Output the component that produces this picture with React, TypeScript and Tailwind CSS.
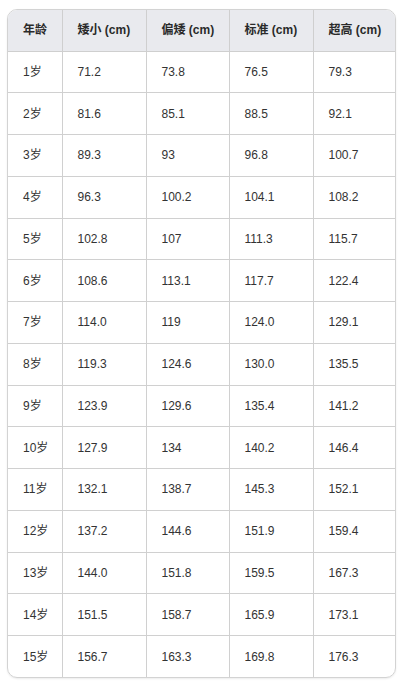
const rows: string[][] = [
  ["1岁", "71.2", "73.8", "76.5", "79.3"],
  ["2岁", "81.6", "85.1", "88.5", "92.1"],
  ["3岁", "89.3", "93", "96.8", "100.7"],
  ["4岁", "96.3", "100.2", "104.1", "108.2"],
  ["5岁", "102.8", "107", "111.3", "115.7"],
  ["6岁", "108.6", "113.1", "117.7", "122.4"],
  ["7岁", "114.0", "119", "124.0", "129.1"],
  ["8岁", "119.3", "124.6", "130.0", "135.5"],
  ["9岁", "123.9", "129.6", "135.4", "141.2"],
  ["10岁", "127.9", "134", "140.2", "146.4"],
  ["11岁", "132.1", "138.7", "145.3", "152.1"],
  ["12岁", "137.2", "144.6", "151.9", "159.4"],
  ["13岁", "144.0", "151.8", "159.5", "167.3"],
  ["14岁", "151.5", "158.7", "165.9", "173.1"],
  ["15岁", "156.7", "163.3", "169.8", "176.3"],
]

const headers = ["年龄", "矮小 (cm)", "偏矮 (cm)", "标准 (cm)", "超高 (cm)"]

export default function App() {
  return (
    <div
      className="min-h-screen bg-white pt-[9px] pl-[7px]"
      style={{ fontFamily: '"Liberation Sans", Arial, "Noto Sans CJK SC", sans-serif' }}
    >
      <div className="w-[389px] overflow-hidden rounded-[10px] border border-[#d3d3d3] shadow-[0_1px_2px_rgba(0,0,0,0.08)]">
        <table className="w-full table-fixed border-collapse text-[12px]">
          <colgroup>
            <col className="w-[54px]" />
            <col className="w-[84px]" />
            <col className="w-[83px]" />
            <col className="w-[84px]" />
            <col />
          </colgroup>
          <thead>
            <tr className="h-[41px] bg-[#e9eaee]">
              {headers.map((h, i) => (
                <th
                  key={h}
                  className={`whitespace-nowrap border-b border-[#cfcfcf] pl-[15px] pr-1 text-left font-bold text-[#2a2a2a] ${
                    i > 0 ? "border-l" : ""
                  }`}
                >
                  {h}
                </th>
              ))}
            </tr>
          </thead>
          <tbody>
            {rows.map((r, ri) => (
              <tr key={r[0]} className="h-[41.75px]">
                {r.map((c, i) => (
                  <td
                    key={i}
                    className={`whitespace-nowrap border-[#d0d0d0] pl-[15px] pr-1 text-[#333] ${
                      i > 0 ? "border-l" : ""
                    } ${ri < rows.length - 1 ? "border-b" : ""}`}
                  >
                    {c}
                  </td>
                ))}
              </tr>
            ))}
          </tbody>
        </table>
      </div>
    </div>
  )
}
